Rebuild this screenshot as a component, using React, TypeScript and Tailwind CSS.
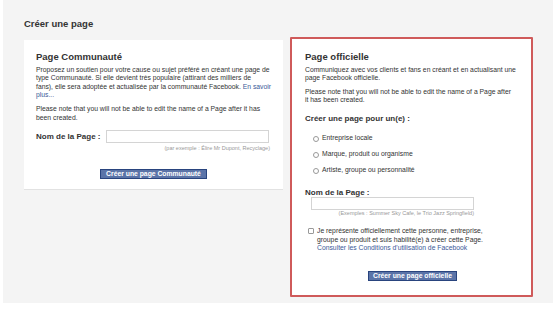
const font = { fontFamily: '"Liberation Sans", Arial, sans-serif' }

function Radio({ label }: { label: string }) {
  return (
    <label className="flex items-center h-[8px] gap-[3px] text-[6.8px] leading-none text-[#333]">
      <span className="block w-[6px] h-[6px] rounded-full border border-[#999] bg-white" />
      {label}
    </label>
  )
}

export default function App() {
  return (
    <div className="w-[560px] h-[309px] bg-white" style={font}>
      <div className="ml-[3px] w-[550px] h-[303px] bg-[#f4f4f4] pl-[21px] pt-[19px]">
        <h1 className="text-[9.5px] font-bold text-[#333] leading-none">Créer une page</h1>

        <div className="mt-[8.5px] flex items-start gap-[7px]">
          {/* Page Communauté */}
          <div className="mt-[3px] w-[259px] h-[150px] bg-white border-b border-[#e2e2e2] px-[12px] pt-[12px]">
            <h2 className="text-[9.5px] font-bold text-[#333] leading-none">Page Communauté</h2>
            <p className="mt-[4px] text-[6.8px] leading-[8.5px] text-[#333] whitespace-nowrap">
              Proposez un soutien pour votre cause ou sujet préféré en créant une page de<br />
              type Communauté. Si elle devient très populaire (attirant des milliers de<br />
              fans), elle sera adoptée et actualisée par la communauté Facebook.{' '}
              <a className="text-[#3b5998]">En savoir</a>
              <br />
              <a className="text-[#3b5998]">plus...</a>
            </p>
            <p className="mt-[5.5px] text-[6.8px] leading-[8.5px] text-[#333] whitespace-nowrap">
              Please note that you will not be able to edit the name of a Page after it has<br />
              been created.
            </p>
            <div className="mt-[8px] flex items-center gap-[6px]">
              <span className="text-[8px] font-bold text-[#333] whitespace-nowrap">Nom de la Page :</span>
              <div className="w-[163px] h-[13px] border border-[#d4d4d4] bg-white" />
            </div>
            <div className="mt-[2px] text-right text-[5.5px] leading-[7.5px] text-[#999] pr-[1px]">
              (par exemple : Élire Mr Dupont, Recyclage)
            </div>
            <div className="mt-[16.5px] flex justify-center">
              <button className="h-[10px] px-[5px] bg-[#5b74a8] border border-[#29447e] text-white text-[6.8px] font-bold leading-none">
                Créer une page Communauté
              </button>
            </div>
          </div>

          {/* Page officielle */}
          <div className="w-[243px] h-[260px] bg-white border-2 border-[#cf5a5a] rounded-[1px] px-[13px] pt-[13px]">
            <h2 className="text-[9.5px] font-bold text-[#333] leading-none">Page officielle</h2>
            <p className="mt-[4px] text-[6.8px] leading-[8.5px] text-[#333] whitespace-nowrap">
              Communiquez avec vos clients et fans en créant et en actualisant une<br />
              page Facebook officielle.
            </p>
            <p className="mt-[5px] text-[6.8px] leading-[8.5px] text-[#333] whitespace-nowrap">
              Please note that you will not be able to edit the name of a Page after<br />
              it has been created.
            </p>
            <h3 className="mt-[10px] text-[8px] font-bold text-[#333] leading-none">Créer une page pour un(e) :</h3>
            <div className="mt-[12px] ml-[8px] flex flex-col gap-[8px]">
              <Radio label="Entreprise locale" />
              <Radio label="Marque, produit ou organisme" />
              <Radio label="Artiste, groupe ou personnalité" />
            </div>
            <div className="mt-[14px] text-[8px] font-bold text-[#333] leading-none">Nom de la Page :</div>
            <div className="ml-[6px] w-[163px] h-[13px] border border-[#d4d4d4] bg-white" />
            <div className="w-[169px] text-right text-[5.5px] leading-[7.5px] text-[#999]">
              (Exemples : Summer Sky Cafe, le Trio Jazz Springfield)
            </div>
            <div className="mt-[10px] ml-[3px] flex items-start gap-[3px]">
              <span className="mt-[1px] block w-[6px] h-[6px] border border-[#999] bg-white rounded-[1px] shrink-0" />
              <p className="text-[6.8px] leading-[8.5px] text-[#333] whitespace-nowrap">
                Je représente officiellement cette personne, entreprise,<br />
                groupe ou produit et suis habilité(e) à créer cette Page.<br />
                <a className="text-[#3b5998]">Consulter les Conditions d'utilisation de Facebook</a>
              </p>
            </div>
            <div className="mt-[18.5px] ml-[63px] flex">
              <button className="h-[10px] px-[4px] bg-[#5b74a8] border border-[#29447e] text-white text-[6.8px] font-bold leading-none">
                Créer une page officielle
              </button>
            </div>
          </div>
        </div>
      </div>
    </div>
  )
}
